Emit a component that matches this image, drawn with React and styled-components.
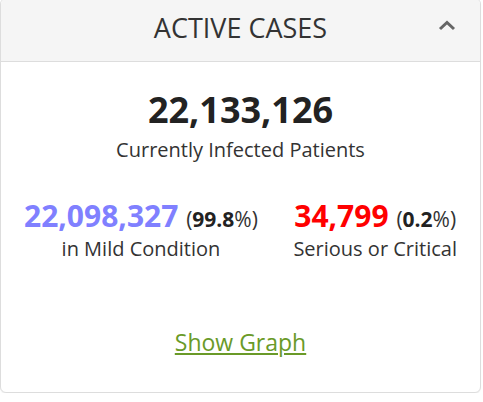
import styled, { createGlobalStyle } from 'styled-components';

const GlobalStyle = createGlobalStyle`
  body {
    margin: 0;
    background: #fff;
    font-family: "Open Sans", "Liberation Sans", sans-serif;
  }
`

const Panel = styled.div`
  width: 481px;
  box-sizing: border-box;
  margin-top: -2px;
  border: 1px solid #ddd;
  border-radius: 6px;
  background: #fff;
  box-shadow: 0 1px 1px rgba(0, 0, 0, 0.05);
  overflow: hidden;
`

const Heading = styled.div`
  position: relative;
  height: 63px;
  display: flex;
  align-items: center;
  justify-content: center;
  background: #f5f5f5;
  border-bottom: 1px solid #ddd;
  box-sizing: border-box;
  padding-bottom: 6px;
`

const Title = styled.h3`
  margin: 0;
  font-size: 27px;
  font-weight: 400;
  color: #333;
`

const Toggle = styled.span`
  position: absolute;
  right: 24px;
  top: 21px;
  display: flex;
`

const Body = styled.div`
  padding: 26px 0 35px;
  text-align: center;
`

const Total = styled.div`
  font-size: 36px;
  font-weight: 700;
  color: #222;
  line-height: 44px;
  margin-bottom: 5px;
`

const Label = styled.div`
  font-size: 20px;
  color: #333;
  line-height: 26px;
`

const Split = styled.div`
  display: flex;
  justify-content: space-between;
  padding: 0 23px;
  margin-top: 33px;
`

const Figure = styled.div`
  text-align: center;
  font-size: 30px;
  line-height: 40px;
`

const Count = styled.span`
  font-weight: 700;
  color: ${props => props.color};
`

const Share = styled.span`
  font-size: 21px;
  line-height: 24px;
  color: #333;

  strong {
    font-weight: 700;
    color: #222;
  }
`

const Footer = styled.div`
  margin-top: 65px;
  font-size: 23px;
  line-height: 30px;
`

const GraphLink = styled.a`
  color: #6a9a28;
  text-decoration: underline;
  cursor: pointer;
`

function App() {
  return (
    <>
      <GlobalStyle />
      <Panel>
        <Heading>
          <Title>ACTIVE CASES</Title>
          <Toggle>
            <svg width="18" height="11" viewBox="0 0 18 11">
              <path d="M2 9 L9 2.5 L16 9" fill="none" stroke="#666" strokeWidth="3" />
            </svg>
          </Toggle>
        </Heading>
        <Body>
          <Total>22,133,126</Total>
          <Label>Currently Infected Patients</Label>
          <Split>
            <Figure>
              <Count color="#8080ff">22,098,327</Count>{' '}
              <Share>(<strong>99.8</strong>%)</Share>
              <Label>in Mild Condition</Label>
            </Figure>
            <Figure>
              <Count color="#ff0000">34,799</Count>{' '}
              <Share>(<strong>0.2</strong>%)</Share>
              <Label>Serious or Critical</Label>
            </Figure>
          </Split>
          <Footer>
            <GraphLink>Show Graph</GraphLink>
          </Footer>
        </Body>
      </Panel>
    </>
  );
}

export default App;
